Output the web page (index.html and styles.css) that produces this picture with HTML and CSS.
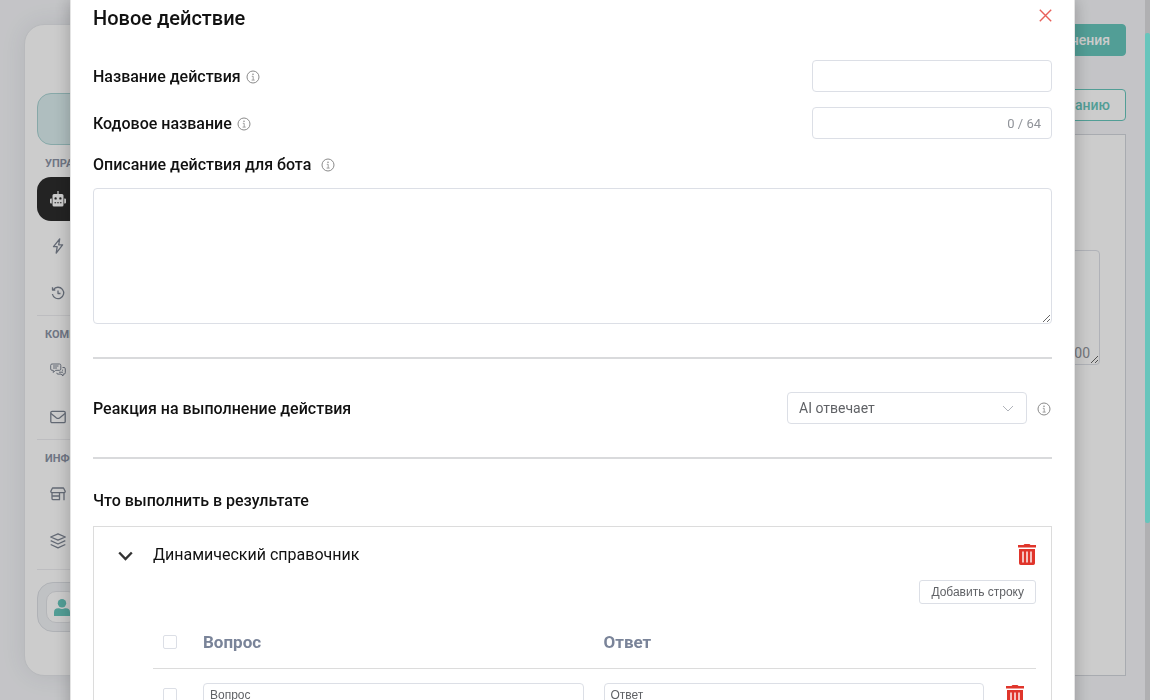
FILE: index.html
```html
<!DOCTYPE html>
<html lang="ru">
	<head>
		<meta charset="utf-8">
		<title>Новое действие</title>
		<link rel="stylesheet" href="styles.css">
	</head>
	<body>
		<svg class="defs" aria-hidden="true">
			<symbol id="info" viewBox="0 0 14 14">
				<circle cx="7" cy="7" r="6" fill="none" stroke="currentColor"/>
				<circle cx="7" cy="4.2" r=".8" fill="currentColor"/>
				<path d="M5.8 6.3H7.2V10M5.6 10.1H8.7" fill="none" stroke="currentColor" stroke-width=".8"/>
			</symbol>
			<symbol id="trash" viewBox="0 0 18 21">
				<path fill="currentColor" d="M5.5 1 6.5 0h5l1 1H18v2.6H0V1z"/>
				<path fill="currentColor" fill-rule="evenodd" d="M1 5h16v14.2Q17 21 15.3 21H2.7Q1 21 1 19.200zM4.300 7.500V18.500H5.700V7.500zM8.300 7.500V18.500H9.700V7.500zM12.300 7.500V18.500H13.700V7.500z"/>
			</symbol>
		</svg>

		<div class="page">
			<aside class="sidebar">
				<a class="project" href="#" aria-label="Проект"></a>
				<div class="nav_title">УПРАВ</div>
				<a class="nav_item active" href="#" aria-label="Боты">
					<svg width="16" height="16" viewBox="0 0 16 16" fill="currentColor">
						<path fill-rule="evenodd" d="M7.400 0h1.200v3H12q1.500 0 1.500 1.500v9.500q0 1.500-1.500 1.500H4q-1.500 0-1.500-1.500V4.500Q2.500 3 4 3h3.400zM5.600 6.200a1.200 1.200 0 1 0 0 2.400 1.200 1.200 0 0 0 0-2.400zM10.400 6.200a1.200 1.200 0 1 0 0 2.400 1.200 1.200 0 0 0 0-2.400zM4.500 11.200v1h1.600v-1zM7.200 11.200v1h1.600v-1zM9.900 11.200v1h1.600v-1z"/>
						<path d="M0 8.500Q0 7.500 1 7.500h.8v5H1q-1 0-1-1zM14.200 7.500h.8q1 0 1 1v3q0 1-1 1h-.8z"/>
					</svg>
				</a>
				<a class="nav_item" href="#" aria-label="Действия">
					<svg width="16" height="16" viewBox="0 0 16 16" class="line"><path d="M9.700.8 3.500 8.700h3.700L6.200 15.200 12.600 6.800H8.700z"/></svg>
				</a>
				<a class="nav_item" href="#" aria-label="История">
					<svg width="16" height="16" viewBox="0 0 16 16" class="line"><path d="M3.400 4.600A5.700 5.700 0 1 1 2.400 9M2.500 2.300v2.700h2.800M8 5.500v3h2.500"/></svg>
				</a>
				<hr class="nav_line">
				<div class="nav_title">КОММУ</div>
				<a class="nav_item" href="#" aria-label="Диалоги">
					<svg width="16" height="16" viewBox="0 0 16 16" class="line thin"><path d="M2 2h7.500q1.300 0 1.300 1.300V7q0 1.300-1.300 1.300H5.500L3.300 10.500V8.300H2Q.7 8.300.7 7V3.300Q.7 2 2 2zM3 4h5.500M3 6h4M12.500 5.500H14q1.300 0 1.300 1.300v4q0 1.300-1.300 1.300h-1v1.900L11 12.100H8q-1.300 0-1.300-1.300M9 10.200h4M12 8.200h1"/></svg>
				</a>
				<a class="nav_item" href="#" aria-label="Рассылки">
					<svg width="16" height="16" viewBox="0 0 16 16" class="line"><rect x=".8" y="2.300" width="14.400" height="11.400" rx="1.300"/><path d="M1 4.500 6.500 8.900q1.500 1.100 3 0L15 4.500"/></svg>
				</a>
				<hr class="nav_line">
				<div class="nav_title">ИНФО</div>
				<a class="nav_item" href="#" aria-label="Магазин">
					<svg width="16" height="16" viewBox="0 0 16 16" class="line"><path d="M2.500 2h11l1.700 3.200q0 1.500-1.500 1.500H2.300Q.8 6.700.8 5.200zM2 6.700v5.800q0 1.200 1.200 1.200h6.300V6.700M2 10h7.500M14 6.700v7.500"/></svg>
				</a>
				<a class="nav_item" href="#" aria-label="База знаний">
					<svg width="16" height="16" viewBox="0 0 16 16" class="line"><path d="M8 .8 15.300 4 8 7.200.7 4zM.7 7.700 8 11l7.300-3.300M.7 11.500 8 14.900l7.300-3.400"/></svg>
				</a>
				<hr class="nav_line last">
				<a class="user" href="#" aria-label="Профиль">
					<span class="avatar">
						<svg width="16" height="17" viewBox="0 0 16 17" fill="currentColor"><circle cx="8" cy="4.200" r="4.200"/><path d="M0 17v-3.500Q0 9.300 4.200 9.300h1Q8 10.500 10.800 9.300h1Q16 9.300 16 13.500V17z"/></svg>
					</span>
				</a>
			</aside>
			<main class="content">
				<button class="btn primary">Сохранить изменения</button>
				<button class="btn outline">Перейти к описанию</button>
				<div class="panel">
					<div class="prompt">
						<textarea aria-label="Инструкция"></textarea>
						<span class="prompt_count">0 / 5000</span>
					</div>
				</div>
			</main>
		</div>

		<div class="overlay">
			<div class="modal" role="dialog" aria-labelledby="modal_title">
				<div class="modal_head">
					<h1 id="modal_title">Новое действие</h1>
					<button class="close" aria-label="Закрыть">
						<svg width="13" height="13" viewBox="0 0 13 13"><path d="M.8.8 12.200 12.200M12.200.8.8 12.200" stroke="currentColor" stroke-width="1.400"/></svg>
					</button>
				</div>

				<div class="row">
					<label for="name">Название действия</label>
					<svg class="info"><use href="#info"/></svg>
					<div class="field"><input type="text" id="name"></div>
				</div>
				<div class="row">
					<label for="code">Кодовое название</label>
					<svg class="info"><use href="#info"/></svg>
					<div class="field"><input type="text" id="code"><span class="count">0 / 64</span></div>
				</div>
				<div class="row desc">
					<label for="desc">Описание действия для бота</label>
					<svg class="info far"><use href="#info"/></svg>
				</div>
				<textarea class="desc_text" id="desc"></textarea>

				<hr class="line_sep">
				<div class="row">
					<label for="reaction">Реакция на выполнение действия</label>
					<div class="field">
						<select id="reaction"><option>AI отвечает</option></select>
						<svg class="arrow" width="12" height="7" viewBox="0 0 12 7"><path d="M1 1l5 5 5-5" fill="none" stroke="currentColor"/></svg>
					</div>
					<svg class="info far"><use href="#info"/></svg>
				</div>
				<hr class="line_sep">

				<h2>Что выполнить в результате</h2>
				<section class="result">
					<button class="toggle" aria-label="Свернуть">
						<svg width="15" height="10" viewBox="0 0 15 10"><path d="M1.200 1.500 7.500 8l6.300-6.500" fill="none" stroke="currentColor" stroke-width="2.400"/></svg>
					</button>
					<div class="result_body">
						<div class="result_head">
							<h3>Динамический справочник</h3>
							<button class="trash" aria-label="Удалить"><svg width="18" height="21"><use href="#trash"/></svg></button>
						</div>
						<button class="add_row">Добавить строку</button>
						<table>
							<thead>
								<tr>
									<th class="check_cell"><input type="checkbox" aria-label="Выбрать все"></th>
									<th>Вопрос</th>
									<th>Ответ</th>
									<th class="trash_cell"></th>
								</tr>
							</thead>
							<tbody>
								<tr>
									<td class="check_cell"><input type="checkbox" aria-label="Выбрать строку"></td>
									<td><input type="text" class="cell" value="Вопрос" aria-label="Вопрос"></td>
									<td><input type="text" class="cell" value="Ответ" aria-label="Ответ"></td>
									<td class="trash_cell"><button class="trash" aria-label="Удалить строку"><svg width="18" height="21"><use href="#trash"/></svg></button></td>
								</tr>
							</tbody>
						</table>
					</div>
				</section>
			</div>
		</div>
		<div class="scrollbar"><div class="thumb"></div></div>
	</body>
</html>
```
FILE: styles.css
```css
* {
	box-sizing: border-box;
}

body {
	margin: 0;
	height: 100vh;
	overflow: hidden;
	background: #f5f6f9;
	font-family: Roboto, "Liberation Sans", sans-serif;
	font-size: 14px;
	color: #111;
}

button, input, select, textarea {
	margin: 0;
	font-family: inherit;
	font-size: 14px;
}
button {
	padding: 0;
	border: none;
	background: none;
}
svg {
	display: block;
	flex: none;
}
.defs {
	position: absolute;
	width: 0;
	height: 0;
}

/* page under the dialog */
.page {
	display: flex;
	height: 100vh;
	padding: 24px;
	gap: 24px;
}
.sidebar {
	width: 76px;
	padding: 68px 12px 0;
	border: 1px solid #e6e8ec;
	border-radius: 20px;
	background: #fff;
	box-shadow: 0 0 24px rgba(60, 70, 90, .1);
}
.project {
	display: block;
	height: 52px;
	border: 1px solid #a9d3d3;
	border-radius: 14px;
	background: #dbeeef;
}
.nav_title {
	height: 32px;
	padding: 4px 0 0 8px;
	overflow: hidden;
	font-size: 11px;
	font-weight: 700;
	line-height: 30px;
	color: #8b93a5;
}
.nav_item {
	display: flex;
	align-items: center;
	height: 44px;
	padding-left: 13px;
	border-radius: 14px;
	color: #7c8492;
}
.nav_item + .nav_item {
	margin-top: 3px;
}
.nav_item.active {
	background: #2c2c2c;
	color: #fff;
}
.line {
	fill: none;
	stroke: currentColor;
	stroke-width: 1.3;
	stroke-linejoin: round;
}
.thin {
	stroke-width: 1;
}
.nav_line {
	height: 1px;
	margin: 0;
	border: none;
	background: #ededf0;
}
.nav_line.last {
	margin: 6px 0 12px;
}
.user {
	display: flex;
	align-items: center;
	height: 50px;
	padding: 0 8px;
	border: 1px solid #dcdfe4;
	border-radius: 16px;
	background: #f1f3f6;
}
.avatar {
	display: flex;
	align-items: center;
	justify-content: center;
	width: 32px;
	height: 32px;
	border: 1px solid #e2e4e8;
	border-radius: 10px;
	background: #fff;
	color: #67c6bc;
}
.content {
	display: flex;
	flex: 1;
	flex-direction: column;
	align-items: flex-end;
}
.btn {
	height: 32px;
	padding: 0 15px;
	border: 1px solid #67c6bc;
	border-radius: 4px;
	font-weight: 500;
}
.primary {
	background: #67c6bc;
	color: #fff;
}
.outline {
	margin-top: 33px;
	background: #fff;
	color: #67c6bc;
}
.panel {
	flex: 1;
	align-self: stretch;
	margin-top: 13px;
	padding: 115px 25px 0;
	border: 1px solid #d3d6dc;
	background: #fff;
}
.prompt {
	position: relative;
}
.prompt textarea {
	display: block;
	width: 100%;
	height: 115px;
	border: 1px solid #dcdfe6;
	border-radius: 4px;
	resize: vertical;
}
.prompt_count {
	position: absolute;
	right: 10px;
	bottom: 4px;
	color: #909399;
}

/* dialog */
.overlay {
	position: fixed;
	inset: 0 5px 0 0;
	padding: 0 70px;
	overflow: hidden;
	background: rgba(0, 0, 0, .2);
}
.modal {
	min-height: 100vh;
	padding: 0 22px 24px;
	border: 1px solid #e4e4e4;
	border-width: 0 1px;
	background: #fff;
	box-shadow: 0 0 16px rgba(0, 0, 0, .25);
}
.modal_head {
	display: flex;
	justify-content: space-between;
	height: 60px;
}
h1, h2, h3 {
	margin: 0;
	font-weight: 500;
}
h1 {
	font-size: 20px;
	line-height: 36px;
}
.close {
	width: 13px;
	height: 31px;
	color: #e8605a;
}
.row {
	display: flex;
	align-items: center;
	height: 32px;
	margin-bottom: 15px;
}
.row label, h2 {
	font-size: 16px;
	font-weight: 500;
}
.row.desc {
	height: 20px;
	margin-bottom: 14px;
}
.info {
	width: 14px;
	height: 14px;
	margin: 2px 1px 0 5px;
	color: #8a8a8a;
}
.info.far {
	margin-left: 10px;
}
.field {
	position: relative;
	display: flex;
	align-items: center;
	width: 240px;
	height: 32px;
	margin-left: auto;
	border: 1px solid #dcdfe6;
	border-radius: 4px;
}
.field input, .field select {
	flex: 1;
	min-width: 0;
	height: 30px;
	padding: 0 11px;
	border: none;
	background: none;
	outline: none;
	color: #606266;
}
.field select {
	appearance: none;
}
.arrow {
	position: absolute;
	right: 12px;
	color: #b0b3ba;
	pointer-events: none;
}
.count {
	padding-right: 10px;
	font-size: 13px;
	color: #909399;
}
.desc_text {
	display: block;
	width: 100%;
	height: 136px;
	border: 1px solid #dcdfe6;
	border-radius: 4px;
	resize: vertical;
}
.line_sep {
	height: 2px;
	margin: 33px 0;
	border: none;
	background: #d9dadc;
}
.row + .line_sep {
	margin: 33px 0 30px;
}
.line_sep + .row {
	margin: 0;
}
h2 {
	line-height: 24px;
}
.result {
	display: flex;
	margin-top: 13px;
	padding: 15px 15px 24px 24px;
	border: 1px solid #dcdcdc;
}
.toggle {
	width: 35px;
	height: 28px;
	color: #333;
}
.result_body {
	flex: 1;
}
.result_head {
	display: flex;
	align-items: center;
	justify-content: space-between;
	height: 24px;
}
h3 {
	font-size: 16px;
	font-weight: 400;
}
.trash {
	display: block;
	color: #e0352b;
}
.add_row {
	display: block;
	height: 24px;
	margin: 14px 0 12px auto;
	padding: 0 11px;
	border: 1px solid #dcdfe6;
	border-radius: 3px;
	font-family: "Liberation Sans", sans-serif;
	font-size: 12px;
	color: #606266;
}
table {
	width: 100%;
	border-collapse: collapse;
	table-layout: fixed;
}
th {
	height: 52px;
	padding: 0 0 0 20px;
	border-bottom: 1px solid #dcdcdc;
	font-size: 17px;
	font-weight: 700;
	text-align: left;
	color: #7a8499;
}
td {
	height: 54px;
	padding: 0 0 0 20px;
}
.check_cell {
	width: 30px;
	padding-left: 10px;
}
.trash_cell {
	width: 52px;
	padding-left: 22px;
}
input[type=checkbox] {
	display: block;
	width: 14px;
	height: 14px;
	border: 1px solid #dcdfe6;
	border-radius: 2px;
	appearance: none;
	background: #fff;
}
.cell {
	display: block;
	width: 100%;
	height: 24px;
	padding: 0 6px;
	border: 1px solid #dcdfe6;
	border-radius: 4px;
	font-family: "Liberation Sans", sans-serif;
	font-size: 12px;
	color: #606266;
}

.scrollbar {
	position: fixed;
	inset: 0 0 0 auto;
	width: 5px;
	padding-top: 33px;
	background: #b0b0b2;
}
.thumb {
	height: 70vh;
	border-radius: 2px;
	background: #67c5bc;
}
```
